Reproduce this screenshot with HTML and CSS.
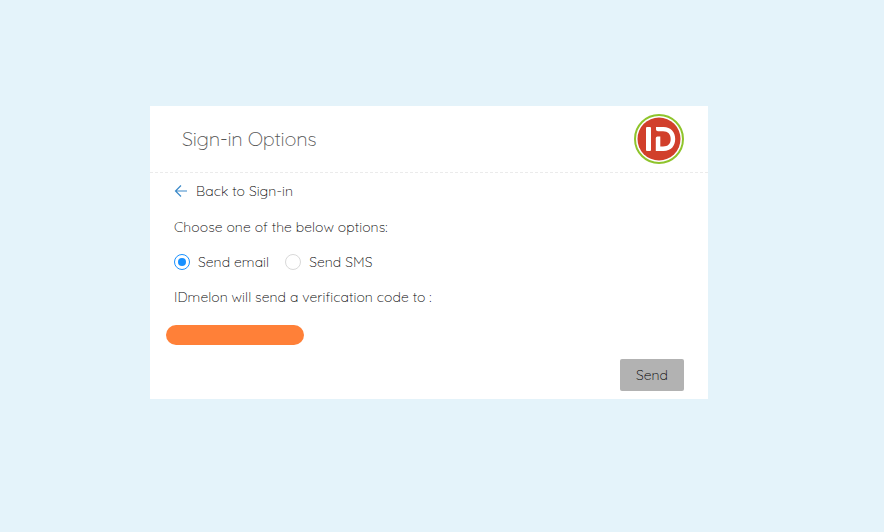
FILE: index.html
```html
<!DOCTYPE html>
<html lang="en">
<head>
<meta charset="utf-8">
<title>Sign-in Options</title>
<link rel="stylesheet" href="styles.css">
</head>
<body>
<main class="card">
  <header class="header">
    <h1 class="title">Sign-in Options</h1>
    <svg class="logo" viewBox="0 0 50 50" role="img" aria-label="IDmelon">
      <circle cx="25" cy="25" r="24" fill="#fff" stroke="#8fc42c" stroke-width="2"/>
      <circle cx="25" cy="25" r="21.5" fill="#d13f2b"/>
      <rect x="12" y="13" width="5" height="24" rx="1" fill="#fff"/>
      <path d="M22 13H29.5C37 13 41.2 18 41.2 25S37 37 29.5 37H21.8V24Q21.8 22.5 23.5 22.5H26.3V32.5H29C34 32.5 36.7 29.8 36.7 25S34 17.3 29 17.3H24Q22 17.3 22 15.5Z" fill="#fff"/>
    </svg>
  </header>
  <section class="content">
    <a class="back">
      <svg class="arrow" viewBox="0 0 14 14"><path d="M13 7H1.5M7 1.5L1.5 7L7 12.5"/></svg>
      <span>Back to Sign-in</span>
    </a>
    <p class="prompt">Choose one of the below options:</p>
    <div class="options">
      <label class="option"><i class="radio checked"></i><span>Send email</span></label>
      <label class="option"><i class="radio"></i><span>Send SMS</span></label>
    </div>
    <p class="notice">IDmelon will send a verification code to :</p>
    <div class="address"></div>
    <button class="send">Send</button>
  </section>
</main>
</body>
</html>
```
FILE: styles.css
```css
* { box-sizing: border-box; }
body {
  margin: 0;
  padding: 106px 0 0 150px;
  height: 532px;
  background: #e4f3fa;
  color: #000;
  font: 300 14px/22px Quicksand, Lato, sans-serif;
  letter-spacing: 0.07px;
  white-space: nowrap;
}
.card { width: 558px; height: 293px; background: #fff; }
.header {
  display: flex;
  align-items: center;
  justify-content: space-between;
  height: 67px;
  padding: 0 24px 0 32px;
  border-bottom: 1px dashed #ebebeb;
}
.title { margin: 0; color: #555; font-size: 20px; font-weight: 300; letter-spacing: -0.25px; }
.logo { width: 50px; height: 50px; }
.content { display: flex; flex-direction: column; padding: 7px 24px 0; }
.back { display: flex; align-items: center; gap: 8px; height: 22px; }
.arrow { width: 14px; height: 14px; fill: none; stroke: #3c8ac9; stroke-width: 1.2; }
.prompt { margin: 14px 0 0; }
.options { display: flex; gap: 16px; margin-top: 13px; }
.option { display: flex; align-items: center; gap: 8px; }
.radio {
  display: flex;
  align-items: center;
  justify-content: center;
  width: 16px;
  height: 16px;
  border: 1px solid #d9d9d9;
  border-radius: 50%;
}
.checked { border-color: #1890ff; }
.checked::after { content: ""; width: 8px; height: 8px; border-radius: 50%; background: #1890ff; }
.notice { margin: 13px 0 0; }
.address { width: 138px; height: 20px; margin: 17px 0 0 -8px; border-radius: 10px; background: #ff8038; }
.send {
  align-self: flex-end;
  width: 64px;
  height: 32px;
  margin-top: 14px;
  padding: 0;
  border: 0;
  border-radius: 2px;
  background: #b2b2b2;
  color: #000;
  font: inherit;
  letter-spacing: 0.07px;
}
```
